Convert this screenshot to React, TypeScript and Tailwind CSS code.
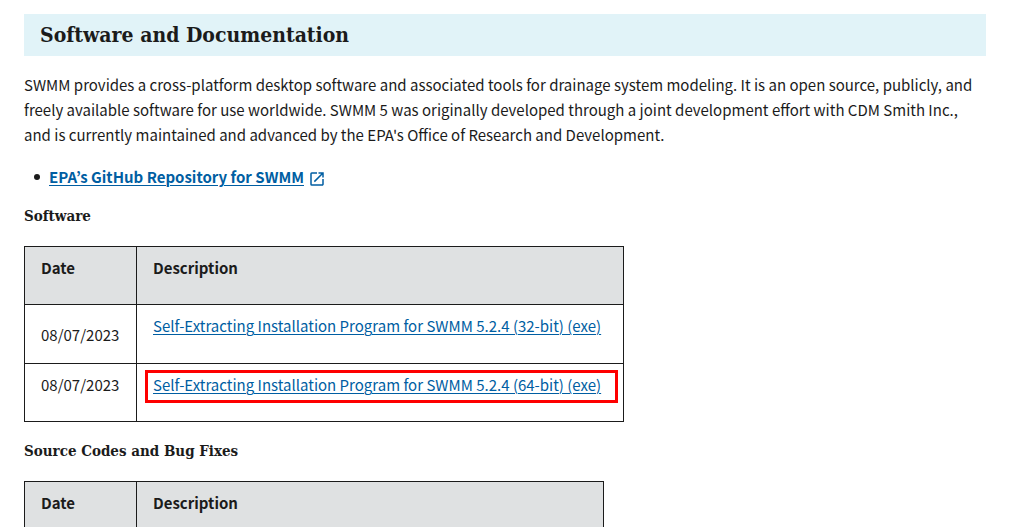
import type { ReactNode } from "react";

const linkClass =
  "text-[#005ea2] underline decoration-1 underline-offset-2";
const headingClass =
  "font-['DejaVu_Serif_Condensed','DejaVu_Serif',serif] font-bold";

function SectionTitle({ children }: { children: ReactNode }) {
  return <h3 className={`${headingClass} text-[15px] leading-5`}>{children}</h3>;
}

function HeaderRow() {
  return (
    <thead>
      <tr className="h-[58px] bg-[#dfe1e2] text-left align-top">
        <th scope="col" className="w-28 border border-[#1b1b1b] px-4 pt-2 font-bold">
          Date
        </th>
        <th scope="col" className="border border-[#1b1b1b] px-4 pt-2 font-bold">
          Description
        </th>
      </tr>
    </thead>
  );
}

function ExternalIcon() {
  return (
    <svg viewBox="0 0 24 24" className="ml-1 inline-block size-[18px] fill-[#005ea2]" aria-hidden="true">
      <path d="M19 19H5V5h7V3H5a2 2 0 0 0-2 2v14a2 2 0 0 0 2 2h14c1.1 0 2-.9 2-2v-7h-2v7zM14 3v2h3.59l-9.83 9.83 1.41 1.41L19 6.41V10h2V3h-7z" />
    </svg>
  );
}

export default function App() {
  return (
    <main className="h-screen overflow-hidden bg-white pt-3.5 pr-7 pl-6 font-['Noto_Sans_CJK_KR',sans-serif] text-[15px] leading-[25px] text-[#1b1b1b]">
      <h2 className={`${headingClass} mr-px bg-[#e1f3f8] px-4 py-2 text-[21px] leading-[26px]`}>
        Software and Documentation
      </h2>
      <p className="mt-4">
        SWMM provides a cross-platform desktop software and associated tools for drainage system
        modeling. It is an open source, publicly, and freely available software for use worldwide.
        SWMM 5 was originally developed through a joint development effort with CDM Smith Inc., and
        is currently maintained and advanced by the EPA's Office of Research and Development.
      </p>
      <ul className="mt-[17px] pl-2.5">
        <li className="flex items-center gap-[9px] before:size-1.5 before:rounded-full before:bg-[#1b1b1b]">
          <a href="#github" className="text-[#005ea2]">
            <span className={`${linkClass} font-bold`}>EPA’s GitHub Repository for SWMM</span>
            <ExternalIcon />
          </a>
        </li>
      </ul>
      <div className="mt-[17px]">
        <SectionTitle>Software</SectionTitle>
      </div>
      <table className="mt-5 w-[600px] border-collapse">
        <HeaderRow />
        <tbody>
          <tr className="h-[59px]">
            <td className="border border-[#1b1b1b] px-4 align-middle">08/07/2023</td>
            <td className="border border-[#1b1b1b] px-4 pt-2 align-top whitespace-nowrap">
              <a href="#swmm-32" className={linkClass}>
                Self-Extracting Installation Program for SWMM 5.2.4 (32-bit) (exe)
              </a>
            </td>
          </tr>
          <tr className="h-[58px] align-top">
            <td className="border border-[#1b1b1b] px-4 pt-2">08/07/2023</td>
            <td className="border border-[#1b1b1b] px-4 pt-2 whitespace-nowrap">
              <div className="relative">
                <a href="#swmm-64" className={linkClass}>
                  Self-Extracting Installation Program for SWMM 5.2.4 (64-bit) (exe)
                </a>
                <span className="pointer-events-none absolute -top-0.5 -right-[11px] -bottom-1.5 -left-2 border-3 border-[#fe0000]" />
              </div>
            </td>
          </tr>
        </tbody>
      </table>
      <div className="mt-[19px]">
        <SectionTitle>Source Codes and Bug Fixes</SectionTitle>
      </div>
      <table className="mt-5 w-[580px] border-collapse">
        <HeaderRow />
      </table>
    </main>
  );
}
